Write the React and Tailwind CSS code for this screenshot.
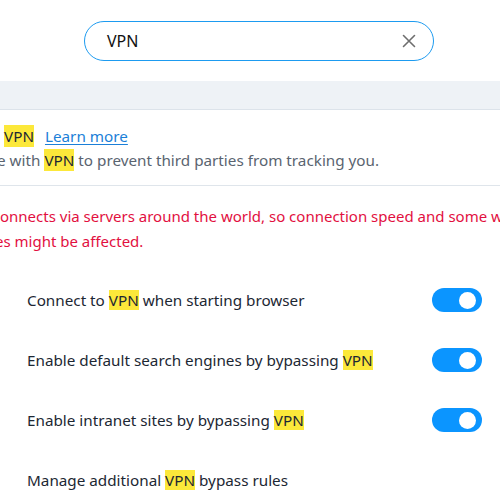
const HL = 'bg-[#fce83a] text-[#1c2733]'

function Mark({ children }) {
  return <span className={HL}>{children}</span>
}

function Toggle() {
  return (
    <div className="w-[50px] h-[24px] rounded-full bg-[#0b95ff] flex items-center justify-end pr-[6px] shrink-0">
      <div className="w-[17px] h-[17px] rounded-full bg-white" />
    </div>
  )
}

const ROWS = [
  { before: 'Connect to ', after: ' when starting browser', toggle: true },
  { before: 'Enable default search engines by bypassing ', after: '', toggle: true },
  { before: 'Enable intranet sites by bypassing ', after: '', toggle: true },
  { before: 'Manage additional ', after: ' bypass rules', toggle: false },
]

export default function App() {
  return (
    <div className="w-[500px] h-[500px] overflow-hidden bg-white text-[15.25px] text-[#1c2733] font-['Segoe_UI','Noto_Sans',sans-serif]">
      <div className="h-[81px] pt-[21px] pl-[84px]">
        <div className="w-[350px] h-[40px] rounded-full border border-[#1d9bf0] flex items-center justify-between pl-[22px] pr-[17px]">
          <span className="text-[16px] text-[#111]">VPN</span>
          <svg width="14" height="14" viewBox="0 0 14 14" fill="none" stroke="#6e6e6e" strokeWidth="1.6" strokeLinecap="round">
            <path d="M1.5 1.5l11 11M12.5 1.5l-11 11" />
          </svg>
        </div>
      </div>
      <div className="h-[29px] bg-[#eef2f6] border-b border-[#dce3ea]" />

      <div className="pt-[14px] pb-[13px] border-b border-[#dfe5eb]">
        <div className="h-[24px] flex items-center whitespace-nowrap pl-[4px]">
          <Mark>VPN</Mark>
          <a href="#" className="ml-[11px] text-[#1b7fd8] underline underline-offset-2">Learn more</a>
        </div>
        <div className="h-[24px] flex items-center whitespace-nowrap -ml-[3px] text-[#5a6470]">
          <span>e with&nbsp;</span>
          <Mark>VPN</Mark>
          <span>&nbsp;to prevent third parties from tracking you.</span>
        </div>
      </div>

      <div className="pt-[18px] text-[15px] text-[#e2103f] whitespace-nowrap">
        <div className="h-[25px] flex items-center">onnects via servers around the world, so connection speed and some websites</div>
        <div className="h-[25px] flex items-center -ml-[5px]">es might be affected.</div>
      </div>

      <div className="pt-[16px]">
        {ROWS.map((r) => (
          <div key={r.before} className="h-[60px] flex items-center justify-between pl-[27px] pr-[18px]">
            <div className="whitespace-nowrap">
              {r.before}
              <Mark>VPN</Mark>
              {r.after}
            </div>
            {r.toggle && <Toggle />}
          </div>
        ))}
      </div>
    </div>
  )
}
